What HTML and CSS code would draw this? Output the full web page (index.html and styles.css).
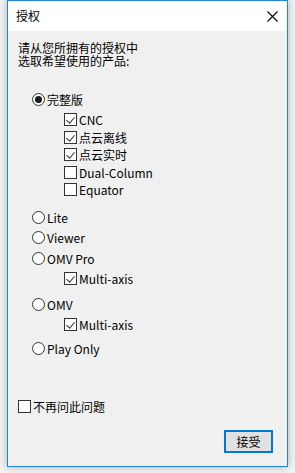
FILE: index.html
```html
<!DOCTYPE html>
<html lang="zh-CN">
<head>
  <meta charset="UTF-8" />
  <meta name="viewport" content="width=device-width, initial-scale=1.0" />
  <title>授权</title>
  <link rel="stylesheet" href="styles.css">
</head>
<body>
  <div class="dialog">
    <div class="titlebar">
      <span class="title">授权</span>
      <span class="close">
        <svg width="11" height="11" viewBox="0 0 11 11"><path d="M0.5 0.5 L10.5 10.5 M10.5 0.5 L0.5 10.5" stroke="#000" stroke-width="1.1" fill="none"/></svg>
      </span>
    </div>

    <div class="content">
      <div class="prompt">
        <p>请从您所拥有的授权中</p>
        <p>选取希望使用的产品:</p>
      </div>

      <div class="options">
        <label class="opt radio first"><span class="dot on"></span>完整版</label>
        <div class="sub">
          <label class="opt check"><span class="box on"></span>CNC</label>
          <label class="opt check"><span class="box on"></span>点云离线</label>
          <label class="opt check"><span class="box on"></span>点云实时</label>
          <label class="opt check"><span class="box"></span>Dual-Column</label>
          <label class="opt check"><span class="box"></span>Equator</label>
        </div>
        <label class="opt radio after-long"><span class="dot"></span>Lite</label>
        <label class="opt radio"><span class="dot"></span>Viewer</label>
        <label class="opt radio"><span class="dot"></span>OMV Pro</label>
        <div class="sub">
          <label class="opt check"><span class="box on"></span>Multi-axis</label>
        </div>
        <label class="opt radio after-sub"><span class="dot"></span>OMV</label>
        <div class="sub">
          <label class="opt check"><span class="box on"></span>Multi-axis</label>
        </div>
        <label class="opt radio after-last"><span class="dot"></span>Play Only</label>
      </div>

      <label class="opt check dontask"><span class="box"></span>不再问此问题</label>

      <div class="actions">
        <button class="btn">接受</button>
      </div>
    </div>
  </div>
</body>
</html>
```

FILE: styles.css
```css
* {
  margin: 0;
  padding: 0;
  box-sizing: border-box;
}
html, body {
  height: 100%;
  overflow: hidden;
}
body {
  background: #f3f3f3;
  font-family: "Noto Sans CJK SC", "Noto Sans", sans-serif;
  font-size: 12px;
  color: #000;
}
.dialog {
  margin-left: 7px;
  width: 281px;
  height: 467px;
  border: 1px solid #1d84d6;
  background: #f0f0f0;
  display: flex;
  flex-direction: column;
  box-shadow: 0 0 8px rgba(0, 0, 0, 0.28);
}
.titlebar {
  height: 30px;
  background: #fff;
  display: flex;
  align-items: center;
  justify-content: space-between;
  padding: 0 9px 0 8px;
}
.title {
  font-size: 12px;
  line-height: 1;
}
.close {
  display: flex;
  width: 11px;
  height: 11px;
}
.content {
  flex: 1;
  display: flex;
  flex-direction: column;
  padding: 10px 14px 13px 10px;
}
.prompt p {
  line-height: 14px;
  height: 13px;
}
.options {
  padding-left: 14px;
}
.opt {
  display: flex;
  align-items: center;
  white-space: nowrap;
}
.radio {
  height: 18px;
  margin-top: 2.5px;
}
.radio.first { margin-top: 23px; }
.radio.after-long { margin-top: 9.75px; }
.radio.after-sub { margin-top: 8px; }
.radio.after-last { margin-top: 6px; }
.sub {
  padding-left: 32px;
  margin-top: 2.75px;
}
.check {
  height: 17.5px;
}
.dot {
  width: 13px;
  height: 13px;
  border: 1px solid #333;
  border-radius: 50%;
  background: #fff;
  margin-right: 2px;
  display: flex;
  align-items: center;
  justify-content: center;
}
.dot.on::after {
  content: "";
  width: 7px;
  height: 7px;
  border-radius: 50%;
  background: #1a1a1a;
}
.box {
  width: 13px;
  height: 13px;
  border: 1px solid #333;
  background: #fff;
  margin-right: 2px;
  position: relative;
}
.box.on::after {
  content: "";
  position: absolute;
  left: 3px;
  top: 1px;
  width: 4px;
  height: 7px;
  border-right: 1px solid #333;
  border-bottom: 1px solid #333;
  transform: rotate(40deg);
}
.dontask {
  margin-top: auto;
  height: 18px;
}
.actions {
  display: flex;
  justify-content: flex-end;
  margin-top: 15px;
}
.btn {
  width: 49px;
  height: 23px;
  border: 2px solid #0078d7;
  background: #e1e1e1;
  font-family: "Noto Sans CJK SC", sans-serif;
  font-size: 12px;
  color: #000;
}
```
